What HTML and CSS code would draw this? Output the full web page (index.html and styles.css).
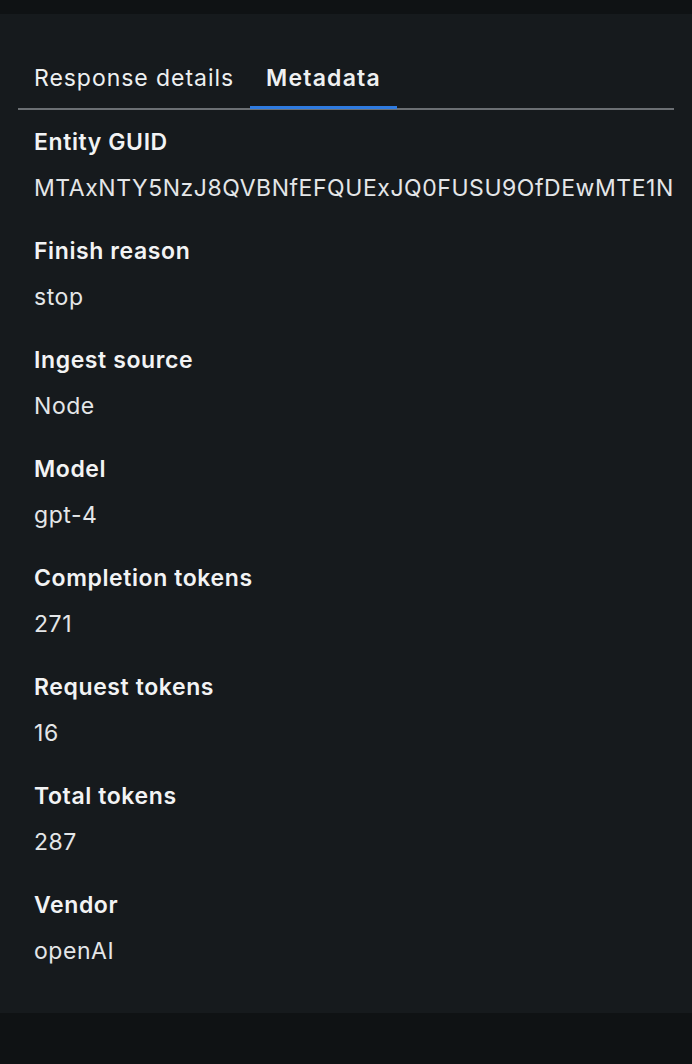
FILE: index.html
```html
<!DOCTYPE html>
<html lang="en">
<head>
<meta charset="utf-8">
<title>Metadata</title>
<link rel="stylesheet" href="styles.css">
</head>
<body>
<div class="topbar"></div>
<section class="panel">
  <nav class="tabs">
    <div class="tab">Response details</div>
    <div class="tab tab-active">Metadata</div>
  </nav>
  <dl class="fields">
    <div class="field"><dt>Entity GUID</dt><dd>MTAxNTY5NzJ8QVBNfEFQUExJQ0FUSU9OfDEwMTE1N</dd></div>
    <div class="field"><dt>Finish reason</dt><dd>stop</dd></div>
    <div class="field"><dt>Ingest source</dt><dd>Node</dd></div>
    <div class="field"><dt>Model</dt><dd>gpt-4</dd></div>
    <div class="field"><dt>Completion tokens</dt><dd>271</dd></div>
    <div class="field"><dt>Request tokens</dt><dd>16</dd></div>
    <div class="field"><dt>Total tokens</dt><dd>287</dd></div>
    <div class="field"><dt>Vendor</dt><dd>openAI</dd></div>
  </dl>
</section>
</body>
</html>
```
FILE: styles.css
```css
html, body {
  margin: 0;
  padding: 0;
}
body {
  background: #0f1214;
  font-family: Inter, "Noto Sans", sans-serif;
  color: #eef0f1;
  height: 1064px;
  overflow: hidden;
}
.topbar {
  height: 14px;
  background: #0f1214;
}
.panel {
  background: #161a1d;
  height: 999px;
  box-sizing: border-box;
  padding: 33px 18px 0;
}
.tabs {
  display: flex;
  border-bottom: 2px solid #6b6f73;
  height: 63px;
  box-sizing: border-box;
}
.tab {
  padding: 16px 16px 0;
  font-size: 23px;
  line-height: 30px;
  height: 61px;
  box-sizing: border-box;
  color: #eef0f1;
  letter-spacing: 0.95px;
}
.tab-active {
  font-weight: 600;
  letter-spacing: 1.2px;
  border-bottom: 3px solid #2f7be0;
  height: 62px;
  margin-bottom: -1px;
}
.fields {
  margin: 0;
  padding: 17px 16px 0;
  display: flex;
  flex-direction: column;
  gap: 33px;
}
.field dt {
  font-size: 23px;
  line-height: 30px;
  font-weight: 600;
  letter-spacing: 0.6px;
  color: #f2f3f4;
}
.field dd {
  margin: 16px 0 0;
  font-size: 23px;
  line-height: 30px;
  letter-spacing: 0.55px;
  color: #e4e6e8;
  white-space: nowrap;
}
```
